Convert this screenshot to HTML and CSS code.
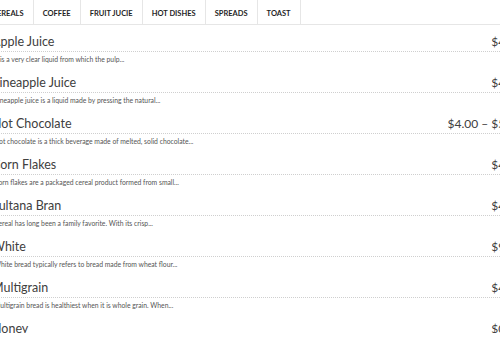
FILE: index.html
```html
<!DOCTYPE html>
<html lang="en">

<head>
    <meta charset="UTF-8">
    <meta name="viewport" content="width=device-width, initial-scale=1.0">
    <title>Menu</title>
    <link rel="stylesheet" href="styles.css">
</head>

<body>
    <div class="menu-page">
        <ul class="menu-tabs">
            <li class="menu-tab">Cereals</li>
            <li class="menu-tab">Coffee</li>
            <li class="menu-tab">Fruit Jucie</li>
            <li class="menu-tab">Hot Dishes</li>
            <li class="menu-tab">Spreads</li>
            <li class="menu-tab">Toast</li>
        </ul>

        <div class="menu-list">
            <div class="menu-item">
                <div class="item-head">
                    <span class="item-name">Apple Juice</span>
                    <span class="item-price">$4.00</span>
                </div>
                <p class="item-desc">It is a very clear liquid from which the pulp...</p>
            </div>
            <div class="menu-item">
                <div class="item-head">
                    <span class="item-name">Pineapple Juice</span>
                    <span class="item-price">$4.00</span>
                </div>
                <p class="item-desc">Pineapple juice is a liquid made by pressing the natural...</p>
            </div>
            <div class="menu-item">
                <div class="item-head">
                    <span class="item-name">Hot Chocolate</span>
                    <span class="item-price">$4.00 &ndash; $5.00</span>
                </div>
                <p class="item-desc">Hot chocolate is a thick beverage made of melted, solid chocolate...</p>
            </div>
            <div class="menu-item">
                <div class="item-head">
                    <span class="item-name">Corn Flakes</span>
                    <span class="item-price">$4.00</span>
                </div>
                <p class="item-desc">Corn flakes are a packaged cereal product formed from small...</p>
            </div>
            <div class="menu-item">
                <div class="item-head">
                    <span class="item-name">Sultana Bran</span>
                    <span class="item-price">$4.00</span>
                </div>
                <p class="item-desc">Cereal has long been a family favorite. With its crisp...</p>
            </div>
            <div class="menu-item">
                <div class="item-head">
                    <span class="item-name">White</span>
                    <span class="item-price">$9.00</span>
                </div>
                <p class="item-desc">White bread typically refers to bread made from wheat flour...</p>
            </div>
            <div class="menu-item">
                <div class="item-head">
                    <span class="item-name">Multigrain</span>
                    <span class="item-price">$4.00</span>
                </div>
                <p class="item-desc">Multigrain bread is healthiest when it is whole grain. When...</p>
            </div>
            <div class="menu-item">
                <div class="item-head">
                    <span class="item-name">Honey</span>
                    <span class="item-price">$0.00</span>
                </div>
                <p class="item-desc">Honey is a sweet, viscous food substance made by bees...</p>
            </div>
        </div>
    </div>
</body>

</html>
```

FILE: styles.css
```css
body {
    font-family: Lato, "Open Sans", sans-serif;
    margin: 0;
    background-color: #fff;
    color: #333;
    overflow: hidden;
}

/* the capture stops just under the last title */
.menu-page {
    height: 333px;
    overflow: hidden;
}

.menu-tabs {
    display: flex;
    list-style: none;
    margin: 0 0 0 -17px;
    padding: 0;
    border-bottom: 1px solid #e6e6e6;
}

.menu-tab {
    padding: 9px 9px 5px;
    line-height: 10px;
    font-size: 7.5px;
    font-weight: bold;
    text-transform: uppercase;
    border-right: 1px solid #e6e6e6;
    color: #1f1f1f;
}

.menu-list {
    width: 530px;
    margin: 7px 0 0 -8px;
}

.menu-item {
    margin-bottom: 8px;
}

.item-head {
    display: flex;
    justify-content: space-between;
    align-items: center;
    height: 19px;
    border-bottom: 1px dotted #cfcfcf;
}

.item-name {
    font-size: 12.5px;
    color: #404040;
}

.item-price {
    font-size: 12px;
    color: #404040;
}

.item-desc {
    margin: 2px 0 0 2px;
    font-size: 6.8px;
    line-height: 11px;
    color: #555;
}
```
